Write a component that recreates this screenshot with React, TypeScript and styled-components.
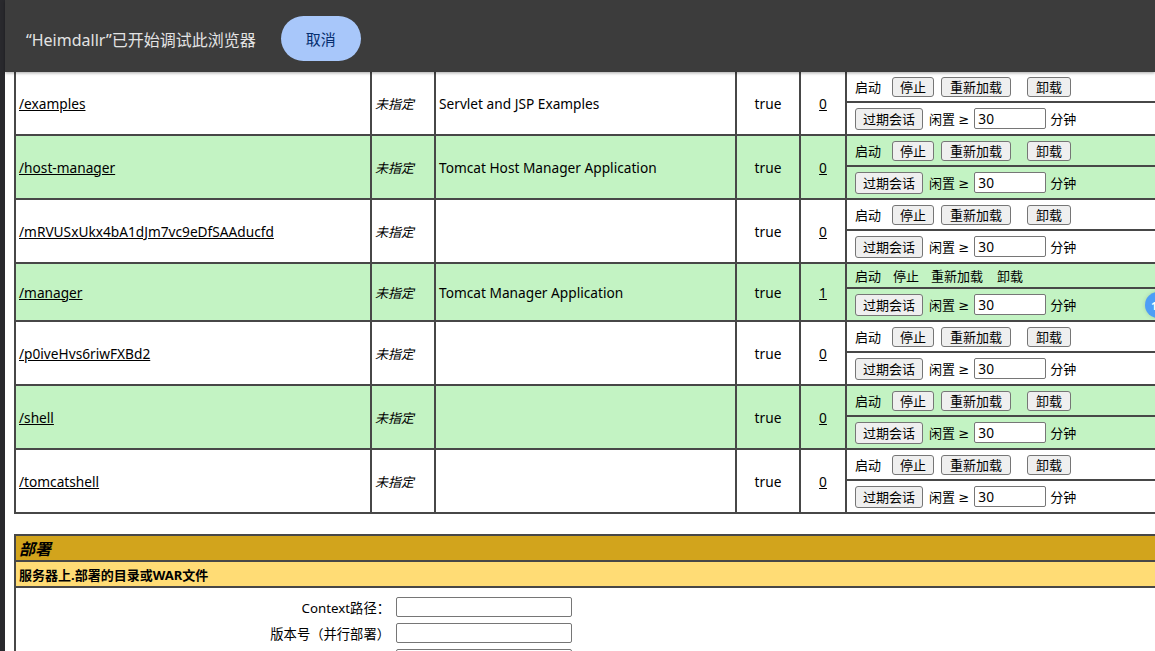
import React from "react";
import styled, { createGlobalStyle } from "styled-components";

const Global = createGlobalStyle`
  html, body { margin: 0; padding: 0; background: #fff; overflow: hidden; }
  body {
    font-family: "Noto Sans", "Noto Sans CJK SC", sans-serif;
    font-size: 13.7px;
    color: #000;
  }
`;

const Shell = styled.div`
  display: flex;
  width: 1155px;
  height: 651px;
  overflow: hidden;
`;

const Strip = styled.div`
  width: 5px;
  flex: none;
  background: #29292d;
`;

const Main = styled.div`
  flex: 1;
  min-width: 0;
  position: relative;
  display: flex;
  flex-direction: column;
`;

const InfoBar = styled.div`
  height: 72px;
  box-sizing: border-box;
  padding: 5px 0 0 21px;
  flex: none;
  background: #3c3c3c;
  display: flex;
  align-items: center;
  gap: 25px;
  position: relative;
  z-index: 2;
  box-shadow: 0 1px 3px rgba(0, 0, 0, 0.35);
`;

const InfoText = styled.span`
  color: #e3e3e3;
  font-size: 16px;
  font-family: "Noto Sans", "Noto Sans CJK SC", sans-serif;
`;

const CancelBtn = styled.button`
  width: 80px;
  height: 45px;
  border-radius: 23px;
  border: none;
  background: #a8c7fa;
  color: #062e6f;
  font-size: 15px;
  font-family: "Noto Sans CJK SC", sans-serif;
`;

const Content = styled.div`
  padding-left: 9px;
  margin-top: -2px;
  display: flex;
  flex-direction: column;
  gap: 20px;
`;

const AppsTable = styled.table`
  border-collapse: collapse;
  table-layout: fixed;
  width: 1230px;
`;

const Row = styled.tr<{ $alt?: boolean }>`
  background: ${(p) => (p.$alt ? "#c3f3c3" : "#ffffff")};
`;

const Cell = styled.td<{ $align?: string; $italic?: boolean }>`
  border: 2px solid #474747;
  padding: 0 3px;
  text-align: ${(p) => p.$align || "left"};
  font-style: ${(p) => (p.$italic ? "italic" : "normal")};
  vertical-align: middle;
  white-space: nowrap;
  overflow: hidden;
`;

const CmdCell = styled.td<{ $h: number }>`
  border: 2px solid #474747;
  padding: 0 0 0 8px;
  height: ${(p) => p.$h}px;
  vertical-align: middle;
  white-space: nowrap;
`;

const CmdLine = styled.div`
  display: flex;
  align-items: center;
`;

const Link = styled.a`
  color: #000;
  text-decoration: underline;
`;

const Btn = styled.button<{ $ml?: number; $h?: number; $px?: number }>`
  height: ${(p) => p.$h || 20}px;
  margin-left: ${(p) => p.$ml || 0}px;
  padding: 0 ${(p) => p.$px ?? 7}px;
  font-size: 13px;
  font-family: "Noto Sans CJK SC", sans-serif;
  background: #efefef;
  color: #000;
  border: 1px solid #767676;
  border-radius: 3px;
  line-height: 1;
`;

const Txt = styled.span<{ $ml?: number }>`
  margin-left: ${(p) => p.$ml || 0}px;
  font-size: 13px;
  font-family: "Noto Sans", "DejaVu Sans", "Noto Sans CJK SC", sans-serif;
`;

const MinInput = styled.input`
  width: 72px;
  height: 21px;
  box-sizing: border-box;
  margin-left: 5px;
  border: 1px solid #767676;
  border-radius: 2px;
  font-size: 13.7px;
  padding: 0 3px;
  font-family: "Noto Sans", sans-serif;
`;

const DeployTable = styled.table`
  border-collapse: collapse;
  width: 1230px;
`;

const TitleCell = styled.td`
  border: 2px solid #474747;
  background: #d2a41c;
  font-weight: bold;
  font-style: italic;
  font-size: 16px;
  height: 23px;
  padding: 0 3px;
  font-family: "Noto Sans CJK SC", sans-serif;
`;

const SubCell = styled.td`
  border: 2px solid #474747;
  background: #ffdc75;
  font-weight: bold;
  font-size: 13px;
  height: 24px;
  padding: 0 3px;
  font-family: "Noto Sans", "Noto Sans CJK SC", sans-serif;
`;

const FormCell = styled.td`
  border: 2px solid #474747;
  padding: 9px 0 20px 0;
`;

const FormGrid = styled.div`
  display: grid;
  grid-template-columns: 374px 176px;
  column-gap: 6px;
  row-gap: 6px;
  align-items: center;
`;

const FormLabel = styled.span`
  text-align: right;
  font-size: 13.3px;
  font-family: "Noto Sans", "Noto Sans CJK SC", sans-serif;
`;

const FormInput = styled.input`
  width: 176px;
  height: 20px;
  box-sizing: border-box;
  border: 1px solid #767676;
  border-radius: 2px;
`;

const Badge = styled.div`
  position: absolute;
  left: 1140px;
  top: 292px;
  width: 26px;
  height: 26px;
  border-radius: 50%;
  background: #4d9ef6;
  color: #fff;
  font-weight: bold;
  font-size: 11px;
  display: flex;
  align-items: center;
  padding-left: 6px;
  box-sizing: border-box;
  z-index: 3;
  box-shadow: 0 0 4px rgba(0, 0, 0, 0.15);
`;

type App = {
  path: string;
  name: string;
  sessions: string;
  running: boolean;
};

const apps: App[] = [
  { path: "/examples", name: "Servlet and JSP Examples", sessions: "0", running: false },
  { path: "/host-manager", name: "Tomcat Host Manager Application", sessions: "0", running: false },
  { path: "/mRVUSxUkx4bA1dJm7vc9eDfSAAducfd", name: "", sessions: "0", running: false },
  { path: "/manager", name: "Tomcat Manager Application", sessions: "1", running: true },
  { path: "/p0iveHvs6riwFXBd2", name: "", sessions: "0", running: false },
  { path: "/shell", name: "", sessions: "0", running: false },
  { path: "/tomcatshell", name: "", sessions: "0", running: false },
];

function AppRows({ app, alt }: { app: App; alt: boolean }) {
  return (
    <>
      <Row $alt={alt}>
        <Cell rowSpan={2}>
          <Link href="#">{app.path}</Link>
        </Cell>
        <Cell rowSpan={2} $italic>
          <Txt>未指定</Txt>
        </Cell>
        <Cell rowSpan={2}>{app.name}</Cell>
        <Cell rowSpan={2} $align="center">
          true
        </Cell>
        <Cell rowSpan={2} $align="center">
          <Link href="#">{app.sessions}</Link>
        </Cell>
        {app.running ? (
          <CmdCell $h={23}>
            <CmdLine>
              <Txt>启动</Txt>
              <Txt $ml={12}>停止</Txt>
              <Txt $ml={12}>重新加载</Txt>
              <Txt $ml={14}>卸载</Txt>
            </CmdLine>
          </CmdCell>
        ) : (
          <CmdCell $h={29}>
            <CmdLine>
              <Txt>启动</Txt>
              <Btn $ml={11}>停止</Btn>
              <Btn $ml={7} $px={8}>重新加载</Btn>
              <Btn $ml={16} $px={8}>卸载</Btn>
            </CmdLine>
          </CmdCell>
        )}
      </Row>
      <Row $alt={alt}>
        <CmdCell $h={31}>
          <CmdLine>
            <Btn $h={22}>过期会话</Btn>
            <Txt $ml={6}>闲置 ≥</Txt>
            <MinInput defaultValue="30" />
            <Txt $ml={4}>分钟</Txt>
          </CmdLine>
        </CmdCell>
      </Row>
    </>
  );
}

export default function AppPage() {
  return (
    <>
      <Global />
      <Shell>
        <Strip />
        <Main>
          <InfoBar>
            <InfoText>“Heimdallr”已开始调试此浏览器</InfoText>
            <CancelBtn>取消</CancelBtn>
          </InfoBar>
          <Content>
            <AppsTable>
              <colgroup>
                <col style={{ width: 356 }} />
                <col style={{ width: 64 }} />
                <col style={{ width: 301 }} />
                <col style={{ width: 64 }} />
                <col style={{ width: 46 }} />
                <col />
              </colgroup>
              <tbody>
                {apps.map((a, i) => (
                  <AppRows key={a.path} app={a} alt={i % 2 === 1} />
                ))}
              </tbody>
            </AppsTable>
            <DeployTable>
              <tbody>
                <tr>
                  <TitleCell>部署</TitleCell>
                </tr>
                <tr>
                  <SubCell>服务器上.部署的目录或WAR文件</SubCell>
                </tr>
                <tr>
                  <FormCell>
                    <FormGrid>
                      <FormLabel>Context路径：</FormLabel>
                      <FormInput />
                      <FormLabel>版本号（并行部署）</FormLabel>
                      <FormInput />
                      <FormLabel />
                      <FormInput />
                    </FormGrid>
                  </FormCell>
                </tr>
              </tbody>
            </DeployTable>
          </Content>
          <Badge>1:</Badge>
        </Main>
      </Shell>
    </>
  );
}
